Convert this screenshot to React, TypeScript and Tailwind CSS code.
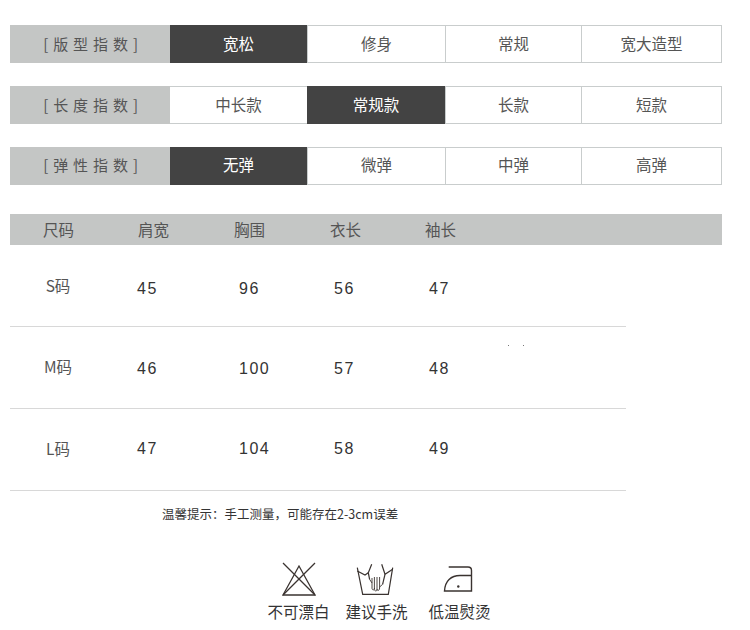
const cjk = "font-['Noto_Sans_CJK_SC','Liberation_Sans',sans-serif]";

const indexRows = [
  { label: "[ 版 型 指 数 ]", items: ["宽松", "修身", "常规", "宽大造型"], active: 0, textPad: "" },
  { label: "[ 长 度 指 数 ]", items: ["中长款", "常规款", "长款", "短款"], active: 1, textPad: "" },
  { label: "[ 弹 性 指 数 ]", items: ["无弹", "微弹", "中弹", "高弹"], active: 0, textPad: "pb-[2px]" },
];

const sizes = [
  { size: "S码", values: ["45", "96", "56", "47"], sizeTop: "pt-[28px]", valueTop: "pt-[32px]" },
  { size: "M码", values: ["46", "100", "57", "48"], sizeTop: "pt-[27px]", valueTop: "pt-[30px]" },
  { size: "L码", values: ["47", "104", "58", "49"], sizeTop: "pt-[27px]", valueTop: "pt-[28px]" },
];

function IndexRow({ label, items, active, textPad }: { label: string; items: string[]; active: number; textPad: string }) {
  return (
    <div className="flex h-[38px] w-[712px] text-[15.5px] text-[#555]">
      <div className={`flex w-[161px] items-center justify-center bg-[#c4c6c5] pl-[2px] text-[15px] tracking-[0.8px] text-[#555] ${textPad}`}>
        {label}
      </div>
      <div className="grid flex-1 grid-cols-[137px_138px_136px_140px] border-y border-r border-[#c9cdcd]">
        {items.map((item, i) => (
          <div
            key={item}
            className={
              i === active
                ? `-my-px flex items-center justify-center bg-[#434343] text-white ${textPad}`
                : `flex items-center justify-center border-l border-[#c9cdcd] first:border-l-0 ${textPad}`
            }
          >
            {item}
          </div>
        ))}
      </div>
    </div>
  );
}

function NoBleachIcon() {
  return (
    <svg width="36" height="35" viewBox="0 0 36 35" fill="none" stroke="#3a3330" strokeWidth="1.3">
      <path d="M18 4 L2 33 H34 Z" />
      <path d="M2 1 L34 33" />
      <path d="M34 1 L2 33" />
    </svg>
  );
}

function HandWashIcon() {
  return (
    <svg className="-ml-[3px]" width="38" height="33" viewBox="0 0 38 33" fill="none" stroke="#3a3330" strokeWidth="1.2">
      <path d="M1.3 4.7 L6.7 31.3 H32.3 L36.7 4.7" />
      <path d="M1.3 8 L9 12 L12.3 9.7" />
      <path d="M15.7 1.3 L12.3 9.7 L13.6 16.3" />
      <path d="M25.7 1.3 L29 11.3 L36.7 6.3" />
      <path d="M29 11.3 L26.6 21.3" />
      <g strokeWidth="0.9">
        <path d="M16 15 V25 C16 27.5 18.4 27.5 18.4 25 V14" />
        <path d="M18.4 25 C18.4 29 21 29 21 26 V14" />
        <path d="M21 26 C21 28 23.6 28 23.6 25 V14" />
        <path d="M13.6 16.3 L16 20" />
        <path d="M23.6 24 L26.6 21.3" />
      </g>
    </svg>
  );
}

function IronIcon() {
  return (
    <svg className="-ml-[3px]" width="30" height="28" viewBox="0 0 30 28" fill="none" stroke="#3a3330" strokeWidth="1.4">
      <path d="M5.7 2 H25 C27 2 28.5 3.5 28.5 5.5 V26 H1.5 C2 16 8 10.5 17 10.5 H28.5" />
      <circle cx="15.3" cy="21.5" r="1.2" fill="#3a3330" stroke="none" />
    </svg>
  );
}

export default function App() {
  return (
    <div className={`h-[630px] w-[750px] overflow-hidden bg-white ${cjk}`}>
      <div className="flex flex-col gap-[23px] pl-[10px] pt-[25px]">
        {indexRows.map((row) => (
          <IndexRow key={row.label} {...row} />
        ))}
      </div>

      <div className="ml-[10px] mt-[29px] w-[712px]">
        <div className="flex h-[31px] items-center bg-[#c4c6c5] pl-[33px] text-[15.5px] text-[#555]">
          <span className="w-[95px]">尺码</span>
          <span className="w-[96px]">肩宽</span>
          <span className="w-[96px]">胸围</span>
          <span className="w-[95px]">衣长</span>
          <span>袖长</span>
        </div>
        <div className="relative w-[616px]">
          {sizes.map((row) => (
            <div key={row.size} className="flex h-[82px] items-start border-b border-[#d8d8d8]">
              <div className={`w-[127px] pr-[31px] text-center text-[15.5px] leading-[24px] text-[#555] ${row.sizeTop}`}>
                {row.size}
              </div>
              {row.values.map((value, i) => (
                <div
                  key={i}
                  className={`font-['Liberation_Sans',sans-serif] text-[16px] leading-[24px] tracking-[1.5px] text-[#333] ${row.valueTop} ${
                    i === 0 ? "w-[102px]" : i === 1 ? "w-[95px]" : i === 2 ? "w-[95px]" : ""
                  }`}
                >
                  {value}
                </div>
              ))}
            </div>
          ))}
          <span className="absolute left-[498px] top-[100px] h-px w-px bg-[#777]" />
          <span className="absolute left-[513px] top-[100px] h-px w-px bg-[#777]" />
        </div>
      </div>

      <p className="ml-[162px] mt-[14px] whitespace-nowrap text-[12.5px] leading-[18px] text-[#333]">
        温馨提示：手工测量，可能存在2-3cm误差
      </p>

      <div className="ml-[268px] mt-[38px] flex">
        <div className="flex w-[61px] flex-col items-center">
          <div className="flex h-[36px] items-center">
            <NoBleachIcon />
          </div>
          <span className="mt-[2px] whitespace-nowrap text-[15.5px] leading-[24px] text-[#333]">不可漂白</span>
        </div>
        <div className="ml-[17px] flex w-[61px] flex-col items-center">
          <div className="flex h-[36px] items-center">
            <HandWashIcon />
          </div>
          <span className="mt-[2px] whitespace-nowrap text-[15.5px] leading-[24px] text-[#333]">建议手洗</span>
        </div>
        <div className="ml-[22px] flex w-[61px] flex-col items-center">
          <div className="flex h-[36px] items-center">
            <IronIcon />
          </div>
          <span className="mt-[2px] whitespace-nowrap text-[15.5px] leading-[24px] text-[#333]">低温熨烫</span>
        </div>
      </div>
    </div>
  );
}
